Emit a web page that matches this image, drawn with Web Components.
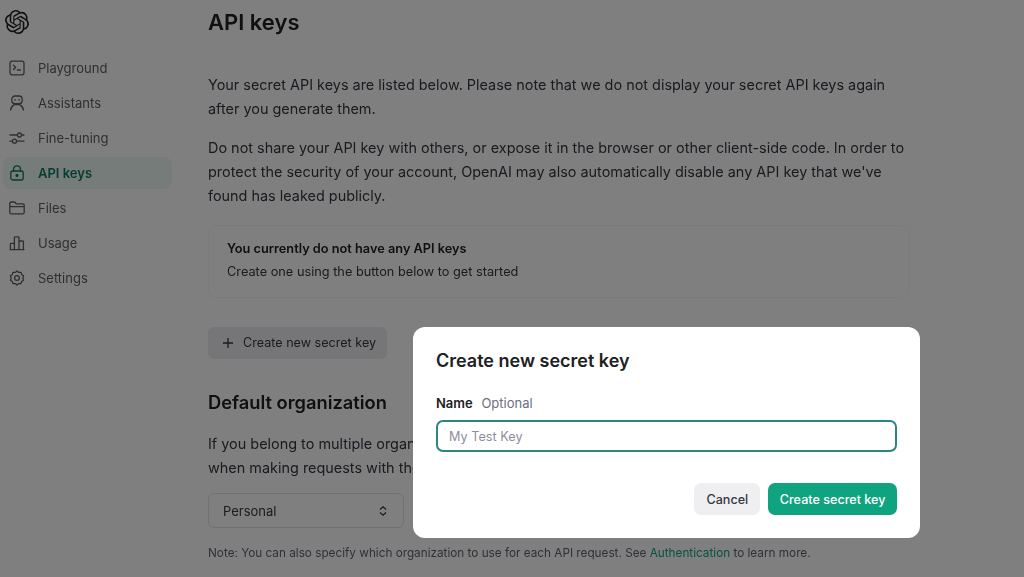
<!DOCTYPE html>
<html lang="en">
<head>
<meta charset="utf-8">
<title>API keys</title>
<style>
  html, body { margin: 0; height: 100%; overflow: hidden; background: #fff; }
  body { font-family: Inter, "Noto Sans", sans-serif; color: #202123; }
</style>
</head>
<body>
<api-page>
  <side-nav slot="nav">
    <nav-item label="Playground"><svg viewBox="0 0 16 16"><rect x="1" y="1.2" width="14" height="13.6" rx="2"/><path d="M4.4 5.2l2.4 2.2-2.4 2.2M8.4 10h3"/></svg></nav-item>
    <nav-item label="Assistants"><svg viewBox="0 0 16 16"><rect x="2.8" y="1" width="10.4" height="7.6" rx="3.2"/><path d="M6 4.4v.8M10 4.4v.8M1.6 15c.2-3 2-4.4 3.6-5.4h5.6c1.6 1 3.4 2.4 3.6 5.4"/></svg></nav-item>
    <nav-item label="Fine-tuning"><svg viewBox="0 0 16 16"><path d="M1 5h7.5M12.5 5H15M1 11.2h2.5M7.5 11.2H15"/><circle cx="10.5" cy="5" r="2"/><circle cx="5.5" cy="11.2" r="2"/></svg></nav-item>
    <nav-item label="API keys" active><svg viewBox="0 0 16 16"><rect x="1.8" y="6" width="12.4" height="9" rx="2"/><path d="M4.6 6V4.2a3.4 3.4 0 0 1 6.800 0V6"/><circle cx="8" cy="10.4" r=".9" fill="currentColor"/></svg></nav-item>
    <nav-item label="Files"><svg viewBox="0 0 16 16"><path d="M.8 3.4A1.4 1.4 0 0 1 2.2 2h3.4l1.600 1.800h6.600a1.400 1.400 0 0 1 1.400 1.400v7.200a1.400 1.400 0 0 1-1.400 1.400H2.200a1.400 1.400 0 0 1-1.400-1.400zM.8 6.600h14.400"/></svg></nav-item>
    <nav-item label="Usage"><svg viewBox="0 0 16 16"><path d="M1.4 14.6V9.2a.8.8 0 0 1 .8-.8h3.200V14.600zM5.400 14.600V2.600a.8.800 0 0 1 .8-.8h3a.8.800 0 0 1 .8.800V14.600zM10 14.600V6h3.600a.8.800 0 0 1 .8.800v7.800zM1 14.600h14"/></svg></nav-item>
    <nav-item label="Settings"><svg viewBox="0 0 16 16"><path d="M8 .9l1.700 1.500 2.300-.1.700 2.200 1.900 1.300-.8 2.200.8 2.200-1.900 1.300-.7 2.200-2.300-.1L8 15.100l-1.700-1.500-2.300.1-.7-2.200-1.900-1.300.8-2.200-.8-2.200 1.900-1.300.7-2.200 2.300.1z"/><circle cx="8" cy="8" r="2.400"/></svg></nav-item>
  </side-nav>
  <keys-content slot="main"></keys-content>
  <secret-dialog slot="dialog"></secret-dialog>
</api-page>

<script>
  // Page frame: sidebar, main column, dimming layer and the dialog on top
  class ApiPage extends HTMLElement {
    constructor() {
      super();
      this.attachShadow({ mode: 'open' });
      this.shadowRoot.innerHTML = `
        <style>
          :host { display: flex; position: relative; width: 1024px; height: 577px; overflow: hidden; }
          .nav { flex: 0 0 192px; filter: blur(.5px); }
          .main { flex: 1; min-width: 0; filter: blur(.5px); }
          .dim { position: absolute; inset: 0; background: rgba(0, 0, 0, .5); }
        </style>
        <div class="nav"><slot name="nav"></slot></div>
        <div class="main"><slot name="main"></slot></div>
        <div class="dim"></div>
        <slot name="dialog"></slot>`;
    }
  }

  class SideNav extends HTMLElement {
    constructor() {
      super();
      this.attachShadow({ mode: 'open' });
      this.shadowRoot.innerHTML = `
        <style>
          :host { display: block; height: 100%; box-sizing: border-box; padding: 10px 20px 0 3px; }
          .logo { display: block; width: 24px; height: 24px; margin: 0 0 18px 2px; fill: #202123; }
          .items { display: flex; flex-direction: column; gap: 3px; }
        </style>
        <svg class="logo" viewBox="0 0 24 24"><path d="M22.2819 9.8211a5.9847 5.9847 0 0 0-.5157-4.9108 6.0462 6.0462 0 0 0-6.5098-2.9A6.0651 6.0651 0 0 0 4.9807 4.1818a5.9847 5.9847 0 0 0-3.9977 2.9 6.0462 6.0462 0 0 0 .7427 7.0966 5.98 5.98 0 0 0 .511 4.9107 6.051 6.051 0 0 0 6.5146 2.9001A5.9847 5.9847 0 0 0 13.2599 24a6.0557 6.0557 0 0 0 5.7718-4.2058 5.9894 5.9894 0 0 0 3.9977-2.9001 6.0557 6.0557 0 0 0-.7475-7.0729zm-9.022 12.6081a4.4755 4.4755 0 0 1-2.8764-1.0408l.1419-.0804 4.7783-2.7582a.7948.7948 0 0 0 .3927-.6813v-6.7369l2.02 1.1686a.071.071 0 0 1 .038.052v5.5826a4.504 4.504 0 0 1-4.4945 4.4944zm-9.6607-4.1254a4.4708 4.4708 0 0 1-.5346-3.0137l.142.0852 4.783 2.7582a.7712.7712 0 0 0 .7806 0l5.8428-3.3685v2.3324a.0804.0804 0 0 1-.0332.0615L9.74 19.9502a4.4992 4.4992 0 0 1-6.1408-1.6464zM2.3408 7.8956a4.485 4.485 0 0 1 2.3655-1.9728V11.6a.7664.7664 0 0 0 .3879.6765l5.8144 3.3543-2.0201 1.1685a.0757.0757 0 0 1-.071 0l-4.8303-2.7865A4.504 4.504 0 0 1 2.3408 7.872zm16.5963 3.8558L13.1038 8.364 15.1192 7.2a.0757.0757 0 0 1 .071 0l4.8303 2.7913a4.4944 4.4944 0 0 1-.6765 8.1042v-5.6772a.79.79 0 0 0-.407-.667zm2.0107-3.0231l-.142-.0852-4.7735-2.7818a.7759.7759 0 0 0-.7854 0L9.409 9.2297V6.8974a.0662.0662 0 0 1 .0284-.0615l4.8303-2.7866a4.4992 4.4992 0 0 1 6.6802 4.66zM8.3065 12.863l-2.02-1.1638a.0804.0804 0 0 1-.038-.0567V6.0742a4.4992 4.4992 0 0 1 7.3757-3.4537l-.142.0805L8.704 5.459a.7948.7948 0 0 0-.3927.6813zm1.0976-2.3654l2.602-1.4998 2.6069 1.4998v2.9994l-2.5974 1.4997-2.6067-1.4997Z"/></svg>
        <div class="items"><slot></slot></div>`;
    }
  }

  class NavItem extends HTMLElement {
    constructor() {
      super();
      this.attachShadow({ mode: 'open' });
      this.shadowRoot.innerHTML = `
        <style>
          :host { display: flex; align-items: center; gap: 13px; height: 32px; padding: 0 6px; border-radius: 8px; font-size: 13px; color: #5e5f66; }
          :host([active]) { background: rgba(16, 163, 127, .08); color: #0f7a62; font-weight: 600; }
          ::slotted(svg) { width: 16px; height: 16px; fill: none; stroke: currentColor; stroke-width: 1.3; stroke-linejoin: round; stroke-linecap: round; flex: none; }
          .ic { display: flex; width: 16px; }
        </style>
        <span class="ic"><slot></slot></span>
        <span class="label"></span>`;
    }

    connectedCallback() {
      this.shadowRoot.querySelector('.label').textContent = this.getAttribute('label');
    }
  }

  // Main column text, behind the dimming layer
  class KeysContent extends HTMLElement {
    constructor() {
      super();
      this.attachShadow({ mode: 'open' });
      this.shadowRoot.innerHTML = `
        <style>
          :host { display: block; padding: 8px 114px 0 16px; font-size: 14.43px; line-height: 24px; color: #353740; white-space: nowrap; }
          h1 { margin: 0 0 37px; font-size: 22px; line-height: 28px; font-weight: 600; color: #202123; }
          p { margin: 0 0 15px; }
          .empty { margin: 17px 0 0; padding: 11px 18px; height: 49px; border: 1px solid #f7f7f8; border-radius: 8px; font-size: 12.75px; line-height: 23px; color: #353740; }
          .empty b { display: block; font-weight: 600; color: #202123; }
          .add { display: inline-flex; align-items: center; gap: 9px; height: 32px; margin-top: 29px; padding: 0 11px 0 14px; border-radius: 6px; background: #ececf1; font-size: 12.6px; color: #353740; }
          .add svg { width: 12px; height: 12px; stroke: currentColor; stroke-width: 1.3; fill: none; }
          h2 { margin: 31px 0 18px; font-size: 18.3px; line-height: 24px; font-weight: 600; color: #202123; }
          .org { line-height: 23.5px; }
          .select { display: flex; align-items: center; justify-content: space-between; box-sizing: border-box; width: 196px; height: 35px; margin-top: 14px; padding: 0 14px; border: 1px solid #e3e3e8; border-radius: 6px; font-size: 13px; }
          .select svg { width: 12px; height: 12px; fill: none; stroke: currentColor; stroke-width: 1.2; }
          .note { margin: 16px 0 0; font-size: 11.75px; line-height: 18px; color: #5f5f70; }
          a { color: #10a37f; text-decoration: none; }
        </style>
        <h1>API keys</h1>
        <p>Your secret API keys are listed below. Please note that we do not display your secret API keys again<br>after you generate them.</p>
        <p>Do not share your API key with others, or expose it in the browser or other client-side code. In order to<br>protect the security of your account, OpenAI may also automatically disable any API key that we've<br>found has leaked publicly.</p>
        <div class="empty"><b>You currently do not have any API keys</b>Create one using the button below to get started</div>
        <div class="add"><svg viewBox="0 0 12 12"><path d="M6 1v10M1 6h10"/></svg>Create new secret key</div>
        <h2>Default organization</h2>
        <div class="org">If you belong to multiple organ<br>when making requests with the</div>
        <div class="select">Personal<svg viewBox="0 0 12 12"><path d="M3 4.5L6 1.8l3 2.7M3 7.5l3 2.7 3-2.7"/></svg></div>
        <div class="note">Note: You can also specify which organization to use for each API request. See <a>Authentication</a> to learn more.</div>`;
    }
  }

  class SecretDialog extends HTMLElement {
    constructor() {
      super();
      this.attachShadow({ mode: 'open' });
      this.shadowRoot.innerHTML = `
        <style>
          :host { position: absolute; left: 413px; top: 327px; width: 507px; height: 211px; box-sizing: border-box; padding: 21px 23px 0; background: #fff; border-radius: 12px; display: flex; flex-direction: column; color: #202123; }
          h3 { margin: 0; font-size: 18px; line-height: 26px; font-weight: 600; }
          .label { margin-top: 20px; font-size: 13px; line-height: 18px; }
          .label b { font-weight: 600; margin-right: 5px; }
          .label span { color: #6e6e80; }
          .input { box-sizing: border-box; height: 32px; margin-top: 8px; padding: 1px 11px 0; display: flex; align-items: center; border: 2px solid #2a8584; border-radius: 7px; font-size: 12.7px; color: #8e8ea0; }
          .actions { display: flex; justify-content: flex-end; gap: 8px; margin-top: 31px; }
          .btn { display: flex; align-items: center; height: 32px; border-radius: 7px; font-size: 12.6px; font-weight: 500; }
          .cancel { padding: 0 12px; background: #efeff1; color: #353740; }
          .create { padding: 0 11.5px; background: #10a37f; color: #fff; }
        </style>
        <h3>Create new secret key</h3>
        <div class="label"><b>Name</b> <span>Optional</span></div>
        <div class="input">My Test Key</div>
        <div class="actions">
          <div class="btn cancel">Cancel</div>
          <div class="btn create">Create secret key</div>
        </div>`;
    }
  }

  customElements.define('api-page', ApiPage);
  customElements.define('side-nav', SideNav);
  customElements.define('nav-item', NavItem);
  customElements.define('keys-content', KeysContent);
  customElements.define('secret-dialog', SecretDialog);
</script>
</body>
</html>
